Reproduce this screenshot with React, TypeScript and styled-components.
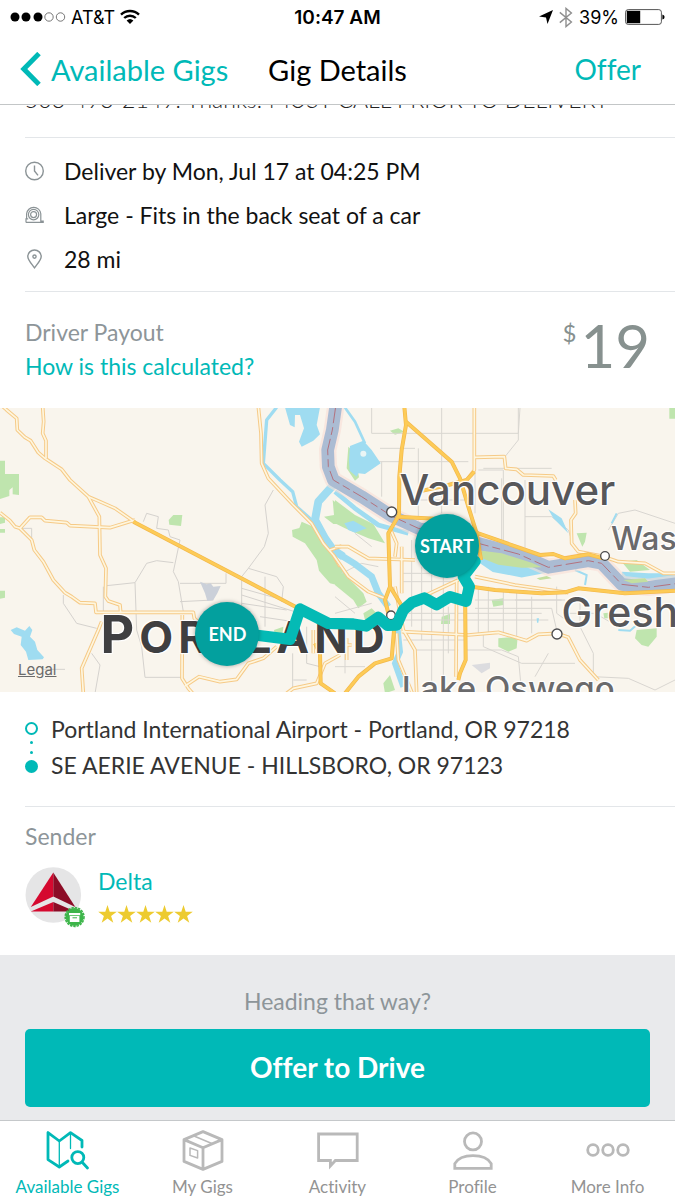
import React from 'react';
import styled, { createGlobalStyle } from 'styled-components';

const teal = '#00b9b7';
const line = '#e3e6e9';
const muted = '#8d9599';

const GlobalStyle = createGlobalStyle`
  *, *::before, *::after { box-sizing: border-box; }
  body {
    margin: 0;
    background: #fff;
    color: #111;
    font-family: Lato, 'Open Sans', sans-serif;
    font-size: 23px;
    font-variant-ligatures: none;
  }
  button { font: inherit; color: inherit; background: none; border: 0; padding: 0; cursor: pointer; }
  a { color: inherit; text-decoration: none; }
  h1, h2, p, ul, ol { margin: 0; padding: 0; font: inherit; list-style: none; }
  svg { display: block; flex: none; }
`;

const Screen = styled.div`
  min-height: 100vh;
  display: flex;
  flex-direction: column;
`;

const Header = styled.header`
  position: sticky;
  top: 0;
  z-index: 10;
  background: #fff;
  border-bottom: 1px solid #c3c6c7;
`;

const StatusBar = styled.div`
  display: grid;
  grid-template-columns: 1fr auto 1fr;
  align-items: center;
  height: 34px;
  padding: 0 10px;
  color: #000;
  font-family: Inter, sans-serif;
  font-size: 18px;
`;

const StatusGroup = styled.div<{ $end?: boolean }>`
  display: flex;
  align-items: center;
  gap: ${p => (p.$end ? 6 : 5)}px;
  justify-content: ${p => (p.$end ? 'flex-end' : 'flex-start')};
`;

const Clock = styled.time`
  font-size: 19px;
  font-weight: 600;
`;

const NavBar = styled.nav`
  display: grid;
  grid-template-columns: 1fr auto 1fr;
  align-items: center;
  height: 70px;
  padding: 0 20px;
  font-size: 29px;
`;

const BackButton = styled.button`
  && { color: ${teal}; }
  display: flex;
  align-items: center;
  gap: 9px;
  justify-self: start;
  white-space: nowrap;
`;

const Title = styled.h1`
  color: #000;
`;

const OfferLink = styled.button`
  && { color: ${teal}; font-size: 28px; padding-right: 14px; }
  justify-self: end;
`;

const Main = styled.main`
  flex: 1;
  display: flex;
  flex-direction: column;
`;

const Section = styled.section`
  margin-left: 25px;
  border-bottom: 1px solid ${line};
`;

const Notes = styled(Section)`
  margin-top: -20px;
  padding-bottom: 24px;
  line-height: 28px;
  color: #222;
  font-weight: 300;
`;

const DetailList = styled(Section).attrs({ as: 'ul' })`
  && { margin-left: 25px; padding: 11px 0 10px; }
`;

const DetailRow = styled.li`
  display: flex;
  align-items: center;
  gap: 20px;
  height: 44px;
`;

const Payout = styled.section`
  display: flex;
  justify-content: space-between;
  padding: 23px 25px 25px;
`;

const Caption = styled.h2`
  color: ${muted};
  line-height: 34px;
`;

const TealLink = styled.a`
  && { color: ${teal}; }
  line-height: 34px;
`;

const Amount = styled.p`
  && { font-size: 60px; line-height: 60px; }
  display: flex;
  gap: 4px;
  color: #87918f;
`;

const Currency = styled.span`
  font-size: 24px;
  line-height: 36px;
`;

const MapBox = styled.section`
  position: relative;
  overflow: hidden;
  aspect-ratio: 675 / 284;
  background: #f9f5ed;
  > svg { position: absolute; inset: 0; width: 100%; height: 100%; }
`;

const MapLabel = styled.span<{ $x: number; $y: number; $size: number; $tone?: string }>`
  position: absolute;
  left: ${p => p.$x}%;
  top: ${p => p.$y}%;
  transform: translateY(-50%);
  font-family: Inter, sans-serif;
  font-size: ${p => p.$size}px;
  font-weight: 500;
  line-height: 1;
  white-space: nowrap;
  color: ${p => p.$tone ?? '#57575a'};
  text-shadow: 0 0 2px #fff, 1px 1px 1px #fff, -1px -1px 1px #fff, 1px -1px 1px #fff, -1px 1px 1px #fff;
`;

const CityLabel = styled(MapLabel)`
  display: block;
  font-weight: 700;
  letter-spacing: 5px;
  &::first-letter { font-size: 52px; }
`;

const Legal = styled.a`
  position: absolute;
  left: 18px;
  bottom: 13px;
  && { color: #6b6b6b; text-decoration: underline; }
  font-family: Inter, sans-serif;
  font-size: 15px;
`;

const Pin = styled.span<{ $x: number; $y: number }>`
  position: absolute;
  left: ${p => p.$x}%;
  top: ${p => p.$y}%;
  transform: translate(-50%, -50%);
  display: grid;
  place-items: center;
  width: 64px;
  height: 64px;
  border-radius: 50%;
  background: #03a09e;
  box-shadow: 0 0 4px rgba(0, 0, 0, 0.35);
  color: #fff;
  font-size: 18px;
  font-weight: 700;
`;

const Stops = styled(Section)`
  display: flex;
  gap: 13px;
  padding: 19px 0 23px;
  color: #333;
  line-height: 36px;
`;

const StopTrack = styled.div`
  display: flex;
  flex-direction: column;
  align-items: center;
  justify-content: space-between;
  width: 13px;
  padding: 11px 0 10px;
`;

const StopDot = styled.i<{ $kind: 'open' | 'tiny' | 'full' }>`
  width: ${p => (p.$kind === 'tiny' ? 3 : 13)}px;
  height: ${p => (p.$kind === 'tiny' ? 3 : 13)}px;
  border-radius: 50%;
  border: ${p => (p.$kind === 'open' ? 2 : 0)}px solid ${teal};
  background: ${p => (p.$kind === 'open' ? 'transparent' : teal)};
`;

const Sender = styled.section`
  padding: 12px 25px 27px;
`;

const SenderCard = styled.div`
  display: flex;
  gap: 13px;
  margin-top: 14px;
`;

const SenderText = styled.div`
  display: flex;
  flex-direction: column;
  gap: 10px;
  a { line-height: 28px; }
`;

const Stars = styled.div`
  display: flex;
`;

const Offer = styled.section`
  flex: 1;
  padding: 29px 25px 13px;
  background: #e9eaec;
  text-align: center;
`;

const Prompt = styled.p`
  color: ${muted};
  line-height: 34px;
`;

const OfferButton = styled.button`
  && { background: ${teal}; color: #fff; font-size: 28px; font-weight: 700; padding-bottom: 2px; }
  width: 100%;
  height: 78px;
  margin-top: 11px;
  border-radius: 5px;
`;

const TabBar = styled.nav`
  display: grid;
  grid-template-columns: repeat(5, 1fr);
  height: 80px;
  border-top: 1px solid #c5c8ca;
  background: #fff;
`;

const Tab = styled.button<{ $active?: boolean }>`
  && { color: ${p => (p.$active ? teal : '#939393')}; font-size: 17px; }
  display: flex;
  flex-direction: column;
  align-items: center;
  gap: 4px;
  padding-top: 9px;
  line-height: 22px;
  svg { color: ${p => (p.$active ? teal : '#b9b9b9')}; }
`;

/* ---------- map drawing ---------- */

const EAST = 1005;

const casedWest = [
  'M0 12L20 30L50 55L52 90L75 112L92 122L115 158L135 175L185 208L210 240L265 290L300 305L345 325L405 367',
  'M128 20L131 65L128 100L138 122V175',
  'M0 338L30 362L45 380L60 385L90 352H125L135 362L200 368L210 377L330 383L405 360',
  'M60 385L95 420L103 450L130 485L160 540L195 578L215 590L240 608L285 610L288 637H580L583 655L605 675',
  'M265 290L298 350L300 465L318 505L316 590L325 603L360 615L362 637',
  'M305 665L295 690L245 805L250 880',
  'M547 645L546 835L565 865L578 880M555 858L597 830L660 845L710 838L745 790L790 775L830 740',
  'M775 20L783 100L785 190L805 235L880 315L935 370L970 430L1000 465L1020 500',
  'M860 880L880 865L950 850L975 790L1020 765',
  'M940 690V760M990 450L1025 438',
];

const casedEast = [
  'M418 20V210L395 240M418 172L508 170L512 205L545 208L565 225L655 228L662 240',
  'M720 300L722 340L708 360L710 430L730 455L800 468L850 485L930 490L985 520H1025',
  'M420 530L540 555L700 578',
  'M0 440H40L100 475L240 480',
  'M-5 465L40 530L100 575L150 595',
  'M200 695L400 705L490 697L575 722L610 703L665 700L700 712L735 780L790 840',
  'M365 540L363 830M200 440V580',
  'M180 560L205 690L240 750L245 880',
  'M185 700L190 780L232 880',
  'M220 610L370 540M165 385L185 430L180 470',
  'M0 735H50M35 715V780',
];

const highwaysEast = [
  'M208 20L213 75L200 150L193 230L192 345L160 400L165 560L150 600L160 640L178 680L170 775L120 790L70 830L30 880',
  'M213 65L350 185L375 235L400 320L425 400L438 480',
  'M390 540L392 780L375 820L370 840',
  'M185 350L330 358L430 400L615 465L655 462L690 475L760 463L805 475',
  'M410 560L480 570L620 580L690 577L730 565L870 580L1025 572',
  'M250 275L340 255L395 240L418 215M165 560L205 625',
];

const lanesWest =
  'M820 270L795 315L805 400L793 440L745 505L725 530M745 505L830 530L850 560L845 605M430 365L440 340L475 350L470 385L505 390L510 410L540 420L520 515L535 545L550 635M520 488L470 482L440 490L405 548L320 557M405 548L410 690L425 740L435 832H545M190 585V610L230 670L290 685M195 808H130M275 760L300 795L285 880M678 520V550H540M725 540V650M795 530V680M60 385L95 385V420M540 605L640 600M725 565L850 600M725 585L900 640M780 650L880 665M725 610L860 630M878 760V865M920 680V790L960 800M880 840H920M310 560V640';

const lanesEast =
  'M320 24V340M110 24V100H550L555 24M110 185H400M140 185V290M135 145H240M250 145V400M430 210H505V450M420 172V340M445 205H650M500 235V450M570 240V470M570 350H650L700 390L720 450M230 300H400M200 390H400M205 520H380M205 545H365M230 420V680M260 500V720M290 500V880M325 530V880M205 640H620M205 660H640M340 620V760M430 560V700M460 560V700M505 570V700M545 575V720M590 590V700M420 600H680M420 625H650L665 690M540 600H690M205 720H390M240 750H370M395 750H500L550 770L560 880M735 590V680L775 760V830M775 830L880 835L960 870L1020 840M665 560V640L720 680M820 390L850 340L900 330L1020 370M0 590L60 640M60 400L110 440M690 640H780L850 680M445 700V740L560 790H720M640 760L600 830M20 520L80 490L130 500M0 640L110 610M0 800H90M30 700V820M550 24V120L510 170M730 500L760 470';

type RoadProps = { paths: string[]; wide?: boolean };

const Roads = ({ paths, wide }: RoadProps) => (
  <g fill="none" strokeLinejoin="round">
    {paths.map(d => <path key={d} d={d} stroke={wide ? '#f3b84b' : '#f6ca87'} strokeWidth={wide ? 12 : 11} />)}
    {paths.map(d => <path key={d} d={d} stroke={wide ? '#fdcb57' : '#fef6df'} strokeWidth={wide ? 8 : 5} />)}
  </g>
);

const COLUMBIA = 'M2 20L-8 90L-22 150L-20 200L-5 240L80 290L170 348L250 385L430 430L550 462L640 502L760 482L800 490L860 553L940 562L1030 550';

const Terrain = () => (
  <svg viewBox="0 24 2025 852" preserveAspectRatio="none" aria-hidden="true">
    <g fill="#bfe5ae">
      <path d="M0 182H15V222H57V285L38 283V262L28 270V288L0 297ZM0 352H15V368L0 372ZM0 387H15V398H0ZM0 572H15V593L0 596Z" />
      <path d="M506 360L520 345H547L543 378L508 374Z" />
      <path d="M876 390L898 384L905 365L940 380L970 430L1020 500V557L990 550L957 512L950 480L915 430L878 410Z" />
      <path d="M972 350L1002 345L998 300L1022 320V372L1000 372Z" />
      <path d="M822 690L850 680L848 700L825 705Z" />
      <g transform={`translate(${EAST})`}>
        <path d="M0 300L60 345L115 372L150 430L100 415L30 385L0 370Z" />
        <path d="M0 480L40 535L85 580L95 605L70 625L55 600L0 555Z" />
        <path d="M85 640L110 625L135 650L90 660ZM165 92L190 85L208 95L180 104Z" />
        <path d="M320 650L345 642V672H318ZM470 600L505 595V615L475 620ZM490 715L548 710L545 745L520 755L490 740Z" />
        <path d="M725 400L755 398L750 425L742 440ZM860 485L905 480L945 510L885 515Z" />
        <path d="M905 690L965 685V710L940 740L920 735L900 715ZM145 850L165 825L180 870L150 880ZM1003 20H1025V56H1003Z" />
        <path d="M805 640L820 638L822 655L808 655ZM40 140L35 205L60 242L72 232L60 160Z" />
      </g>
    </g>
    <path d={lanesWest} fill="none" stroke="#d5d2ce" strokeWidth="3" />
    <path d={lanesEast} transform={`translate(${EAST})`} fill="none" stroke="#d9d6d1" strokeWidth="3" />
    <path d="M600 545L620 553L632 550L640 560L662 558L652 580L640 600L622 603L615 580Z" fill="#cbd0d9" />
    <g fill="#9fdcf1">
      <path d="M855 22H960L950 75L960 103L940 122L905 140L897 125L912 85L900 45L885 45L884 82L870 75Z" />
      <path d="M32 690L50 682L75 692L88 678L97 690L90 710L105 725L112 750L132 772L128 778L85 780L78 755L62 735L65 710L42 702Z" />
      <g fill="none" stroke="#9fdcf1" strokeLinejoin="round">
        <path d="M830 22L800 60L790 190L840 240L878 275L890 320L935 360" strokeWidth="10" />
        <path d="M1000 255L955 305L945 360L975 415L1000 450L1030 470" strokeWidth="24" />
      </g>
      <g transform={`translate(${EAST})`}>
        <path d="M45 138L85 122L110 150L137 190L90 222L70 220L65 230L44 212L42 180Z" />
        <path d="M640 328L680 355L700 400L655 355ZM605 655H612L610 668H606Z" />
        <g fill="none" stroke="#9fdcf1">
          <path d="M28 20L60 65L90 130" strokeWidth="8" />
          <path d="M0 275L60 325L130 375L220 400" strokeWidth="14" />
          <path d="M0 455L60 492L110 530L130 580L160 620" strokeWidth="20" />
          <path d="M188 690L195 755L180 790L205 860" strokeWidth="18" />
          <path d="M425 462L480 500L560 515L640 500" strokeWidth="34" />
          <path d="M720 510L755 525L750 555M845 340L830 370M850 690L885 692L905 675" strokeWidth="6" />
          <path d="M860 525L940 530L1025 530" strokeWidth="20" />
        </g>
        <path d="M28 370L55 362L95 385L60 398L40 390Z" />
      </g>
    </g>
    <g transform={`translate(${EAST})`}>
      <g fill="none" strokeLinejoin="round">
        <path d={COLUMBIA} stroke="#f8ddd5" strokeWidth="52" strokeOpacity=".6" />
        <path d={COLUMBIA} stroke="#abbcd3" strokeWidth="38" />
        <path d={COLUMBIA} stroke="#b3727e" strokeWidth="3" strokeDasharray="50 12 24 12" />
      </g>
      <path d="M440 452L500 460L590 488L620 502L560 503L490 494L440 474Z" fill="#c3dfa0" />
      <path d="M605 535L635 528L650 535L615 540ZM865 540L930 535L940 545L890 550Z" fill="#c3dfa0" />
      <circle cx="85" cy="161" r="9" fill="#e9f5f5" />
      <path d="M410 795L465 788V805L440 820Z" fill="#dcdcdf" />
    </g>
    <Roads paths={casedWest} />
    <g transform={`translate(${EAST})`}><Roads paths={casedEast} /></g>
    <Roads wide paths={['M400 365L895 625', 'M945 730L960 760L962 850L1005 880']} />
    <g transform={`translate(${EAST})`}>
      <Roads wide paths={highwaysEast} />
      <g fill="#fff" stroke="#4b4b4d" strokeWidth="4">
        <circle cx="170" cy="336" r="15" />
        <circle cx="810" cy="468" r="13" />
        <circle cx="666" cy="702" r="15" />
      </g>
    </g>
  </svg>
);

const Route = () => (
  <svg viewBox="0 24 2025 852" preserveAspectRatio="none" aria-hidden="true">
    <circle cx="1173" cy="646" r="13" fill="#fff" stroke="#4b4b4d" strokeWidth="4" />
    <path
      d="M740 702L870 718L900 627L985 670L1060 672L1098 678L1135 652L1163 676L1190 675L1210 630L1235 608L1273 594L1310 614L1350 590L1398 604L1408 560L1390 530L1425 484"
      fill="none" stroke="#04bab5" strokeWidth="34" strokeLinejoin="round" strokeLinecap="round"
    />
  </svg>
);

/* ---------- icons ---------- */

const Signal = () => (
  <svg width="56" height="10" viewBox="0 0 56 10" aria-hidden="true">
    {[5, 16, 28].map(x => <circle key={x} cx={x} cy="5" r="4.5" />)}
    {[39, 50.5].map(x => <circle key={x} cx={x} cy="5" r="4.2" fill="none" stroke="#555" strokeWidth=".8" />)}
  </svg>
);

const Wifi = () => (
  <svg width="20" height="16" viewBox="0 0 20 16" fill="none" stroke="#000" strokeWidth="2.4" aria-hidden="true">
    <path d="M1 5.6A13 13 0 0 1 19 5.6M4.2 9A8.4 8.4 0 0 1 15.8 9" />
    <path d="M10 15L6.6 11.5A5 5 0 0 1 13.4 11.5Z" fill="#000" stroke="none" />
  </svg>
);

const LocationArrow = () => (
  <svg width="14" height="14" viewBox="0 0 14 14" aria-hidden="true"><path d="M14 0L8.5 14L7 7.4L0 6.5Z" /></svg>
);

const Bluetooth = () => (
  <svg width="14" height="21" viewBox="0 0 14 21" fill="none" stroke="#8f8f8f" strokeWidth="1.4" aria-hidden="true">
    <path d="M.8 5.4L12.4 15L7 19.6V1.4L12.4 6L.8 15.6" />
  </svg>
);

const Battery = () => (
  <svg width="40" height="16" viewBox="0 0 40 16" aria-hidden="true">
    <rect x=".6" y=".6" width="35.8" height="14.8" rx="2.6" fill="none" stroke="#555" />
    <rect x="1.8" y="1.8" width="13.4" height="12.4" />
    <path d="M37.4 5.4Q39.6 6 39.6 8T37.4 10.6Z" />
  </svg>
);

const Chevron = () => (
  <svg width="22" height="34" viewBox="0 0 22 34" fill="none" stroke={teal} strokeWidth="5" aria-hidden="true">
    <path d="M19 1.6L3.8 17L19 32.4" />
  </svg>
);

const detailStroke = { fill: 'none', stroke: '#8b9396', strokeWidth: 1.4, 'aria-hidden': true } as const;

const ClockIcon = () => (
  <svg width="19" height="20" viewBox="0 0 19 20" {...detailStroke}>
    <circle cx="9.5" cy="10" r="8.8" /><path d="M9.5 4.6V10L13 14.4" />
  </svg>
);

const TapeIcon = () => (
  <svg width="19" height="20" viewBox="0 0 19 20" {...detailStroke} strokeWidth="1.2">
    <path d="M1 17.4V13.8H3.2M1 17.4H18.2V16.2H15.8V8.8A7 7 0 0 0 8.6 2.4A7 7 0 0 0 1.6 8.8V13.8" />
    <circle cx="8.6" cy="9.6" r="5.2" /><circle cx="8.6" cy="9.6" r="3" />
  </svg>
);

const PinIcon = () => (
  <svg width="19" height="20" viewBox="0 0 19 20" {...detailStroke}>
    <path d="M9.5 18.8C6 14 2.8 10.8 2.8 7.4A6.7 6.4 0 0 1 16.2 7.4C16.2 10.8 13 14 9.5 18.8Z" />
    <circle cx="9.5" cy="7.6" r="1.6" />
  </svg>
);

const Avatar = () => (
  <svg width="60" height="61" viewBox="0 0 60 61" aria-label="Delta logo" role="img">
    <circle cx="28.3" cy="28" r="27.8" fill="#e5e5e6" />
    <path d="M28.3 5.5L5.8 40L28.3 29.5Z" fill="#d5092f" />
    <path d="M28.3 5.5L50.3 40L28.3 29.5Z" fill="#8c0c26" />
    <path d="M28.3 35L5.8 44.6H28.3Z" fill="#d5092f" />
    <path d="M28.3 35L50.3 44.6H28.3Z" fill="#8c0c26" />
    <circle cx="49.6" cy="50" r="9" fill="#3db54a" />
    <circle cx="49.6" cy="50" r="9.4" fill="none" stroke="#3db54a" strokeWidth="1.6" strokeDasharray="2.4 1" />
    <path d="M44 46H55.2V48.2H44ZM44.8 49H54.4V55H44.8Z" fill="#fff" />
    <path d="M47.5 50.8H52" stroke="#3db54a" />
  </svg>
);

const Star = () => (
  <svg width="19" height="18" viewBox="0 0 19 18" fill="#edcb30" aria-hidden="true">
    <path d="M9.5 0L11.7 6.8H18.8L13.1 11L15.3 17.8L9.5 13.6L3.7 17.8L5.9 11L.2 6.8H7.3Z" />
  </svg>
);

const tabStroke = { width: 44, height: 42, viewBox: '0 0 44 42', fill: 'none', stroke: 'currentColor', strokeWidth: 2.8, 'aria-hidden': true } as const;

const GigsMapIcon = () => (
  <svg {...tabStroke} strokeLinejoin="round" strokeLinecap="round">
    <path d="M36 17V10.5L24.5 2.6L13.3 11L2 2.6V29.6L13.3 37L22 31" />
    <path d="M13.3 11V37M24.5 3V18.5" strokeWidth="1.3" />
    <circle cx="31.8" cy="27.6" r="6" /><path d="M36.2 32.2L41.5 38" />
  </svg>
);

const BoxIcon = () => (
  <svg {...tabStroke} strokeLinejoin="round">
    <path d="M22 1.6L41 9.6V31.4L22 39.4L3 31.4V9.6ZM3 9.6L22 17.8L41 9.6M22 17.8V39.4" />
    <path d="M12.4 5.8L31.4 13.8M9 18L16.6 20.6V28L9 25.4Z" strokeWidth="1.5" />
  </svg>
);

const ChatIcon = () => (
  <svg {...tabStroke}><path d="M2.6 4H41.2V30.5H19.4L14.4 36V30.5H2.6Z" /></svg>
);

const ProfileIcon = () => (
  <svg {...tabStroke}>
    <circle cx="22" cy="11.4" r="8.5" />
    <path d="M3.8 38.4V33.6C6.6 28.6 13 25.6 22 25.6S37.4 28.6 40.2 33.6V38.4Z" />
  </svg>
);

const MoreIcon = () => (
  <svg {...tabStroke}>
    {[7, 22, 37].map(x => <circle key={x} cx={x} cy="20" r="5.3" />)}
  </svg>
);

const details = [
  { Icon: ClockIcon, text: 'Deliver by Mon, Jul 17 at 04:25 PM' },
  { Icon: TapeIcon, text: 'Large - Fits in the back seat of a car' },
  { Icon: PinIcon, text: '28 mi' },
];

const tabs = [
  { Icon: GigsMapIcon, label: 'Available Gigs', active: true },
  { Icon: BoxIcon, label: 'My Gigs' },
  { Icon: ChatIcon, label: 'Activity' },
  { Icon: ProfileIcon, label: 'Profile' },
  { Icon: MoreIcon, label: 'More Info' },
];

export default function App() {
  return (
    <Screen>
      <GlobalStyle />
      <Header>
        <StatusBar>
          <StatusGroup><Signal />AT&amp;T<Wifi /></StatusGroup>
          <Clock>10:47 AM</Clock>
          <StatusGroup $end><LocationArrow /><Bluetooth />39%<Battery /></StatusGroup>
        </StatusBar>
        <NavBar>
          <BackButton><Chevron />Available Gigs</BackButton>
          <Title>Gig Details</Title>
          <OfferLink>Offer</OfferLink>
        </NavBar>
      </Header>
      <Main>
        <Notes><p>503-493-2149. Thanks! MUST CALL PRIOR TO DELIVERY</p></Notes>
        <DetailList>
          {details.map(({ Icon, text }) => <DetailRow key={text}><Icon />{text}</DetailRow>)}
        </DetailList>
        <Payout>
          <div>
            <Caption>Driver Payout</Caption>
            <TealLink href="#payout">How is this calculated?</TealLink>
          </div>
          <Amount><Currency>$</Currency>19</Amount>
        </Payout>
        <MapBox aria-label="Route map">
          <Terrain />
          <MapLabel $x={59.2} $y={29} $size={42}>Vancouver</MapLabel>
          <MapLabel $x={90.5} $y={46} $size={32} $tone="#6a6a6c">Was</MapLabel>
          <MapLabel $x={83.2} $y={72} $size={41}>Gresh</MapLabel>
          <MapLabel $x={59.5} $y={98.5} $size={33} $tone="#6a6a6c">Lake Oswego</MapLabel>
          <CityLabel $x={14.9} $y={80} $size={44} $tone="#3f3f41">PORTLAND</CityLabel>
          <Route />
          <Pin $x={66.2} $y={48.6}>START</Pin>
          <Pin $x={33.7} $y={79.6}>END</Pin>
          <Legal href="#legal">Legal</Legal>
        </MapBox>
        <Stops>
          <StopTrack>
            <StopDot $kind="open" /><StopDot $kind="tiny" /><StopDot $kind="tiny" /><StopDot $kind="full" />
          </StopTrack>
          <ol>
            <li>Portland International Airport - Portland, OR 97218</li>
            <li>SE AERIE AVENUE - HILLSBORO, OR 97123</li>
          </ol>
        </Stops>
        <Sender>
          <Caption>Sender</Caption>
          <SenderCard>
            <Avatar />
            <SenderText>
              <TealLink href="#delta">Delta</TealLink>
              <Stars role="img" aria-label="5 stars">{[1, 2, 3, 4, 5].map(n => <Star key={n} />)}</Stars>
            </SenderText>
          </SenderCard>
        </Sender>
        <Offer>
          <Prompt>Heading that way?</Prompt>
          <OfferButton>Offer to Drive</OfferButton>
        </Offer>
      </Main>
      <TabBar>
        {tabs.map(({ Icon, label, active }) => <Tab key={label} $active={active}><Icon />{label}</Tab>)}
      </TabBar>
    </Screen>
  );
}
